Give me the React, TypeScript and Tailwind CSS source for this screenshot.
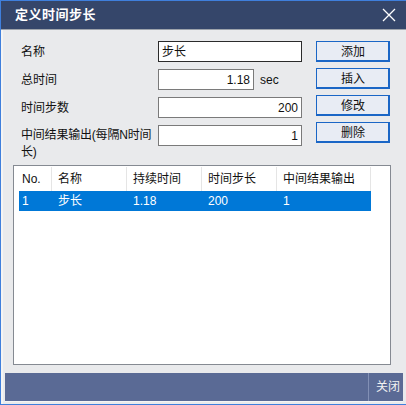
import React from "react"

const font = { fontFamily: '"Liberation Sans", "Noto Sans CJK SC", sans-serif' }

const columns = [
    { key: "no", label: "No.", width: "w-[33px]", pad: "pl-[3px]" },
    { key: "name", label: "名称", width: "w-[75px]", pad: "pl-[6px]" },
    { key: "dur", label: "持续时间", width: "w-[75px]", pad: "pl-[6px]" },
    { key: "step", label: "时间步长", width: "w-[75px]", pad: "pl-[6px]" },
    { key: "out", label: "中间结果输出", width: "w-[94px]", pad: "pl-[6px]" },
]

const rows = [{ no: "1", name: "步长", dur: "1.18", step: "200", out: "1" }]

function Btn({ children }: { children: React.ReactNode }) {
    return (
        <button className="h-[21px] w-[74px] border border-[#1a66c6] bg-[#e8ecf4] text-[12px] text-[#111] shadow-[inset_-1px_-1px_0_#1a66c6] leading-none">
            {children}
        </button>
    )
}

export default function App() {
    return (
        <div
            className="w-[406px] h-[405px] flex flex-col border border-[#3f7fdc] border-r-0 bg-[#e9eaec] text-[12px] text-[#111]"
            style={font}
        >
            {/* title bar */}
            <div className="h-[29px] shrink-0 bg-[#35466a] flex items-center justify-between pl-[14px] pr-[9px] border-b border-[#9da3ab]">
                <span className="text-white font-bold text-[13px] tracking-[0.5px]">定义时间步长</span>
                <svg width="14" height="14" viewBox="0 0 14 14" className="mr-[1px]">
                    <path d="M1 1 L13 13 M13 1 L1 13" stroke="#fff" strokeWidth="1.3" />
                </svg>
            </div>

            <div className="flex-1 flex flex-col border-l-[2px] border-[#f4f4f4]">
                {/* form */}
                <div className="flex pt-[11px] pl-[18px]">
                    <div className="flex flex-col gap-[7px] w-[283px]">
                        <div className="flex items-center h-[21px]">
                            <span className="w-[137px]">名称</span>
                            <div className="w-[144px] h-[21px] border border-[#2b2b2b] bg-white flex items-center px-[3px]">步长</div>
                        </div>
                        <div className="flex items-center h-[21px]">
                            <span className="w-[137px]">总时间</span>
                            <div className="w-[96px] h-[21px] border border-[#7a7a7a] bg-white flex items-center justify-end px-[3px]">1.18</div>
                            <span className="ml-[6px]">sec</span>
                        </div>
                        <div className="flex items-center h-[21px]">
                            <span className="w-[137px]">时间步数</span>
                            <div className="w-[144px] h-[21px] border border-[#7a7a7a] bg-white flex items-center justify-end px-[3px]">200</div>
                        </div>
                        <div className="flex items-start h-[21px]">
                            <span className="w-[137px] shrink-0 leading-[17px] mt-[2px] tracking-[-0.2px]">中间结果输出(每隔N时间长)</span>
                            <div className="w-[144px] h-[21px] shrink-0 border border-[#7a7a7a] bg-white flex items-center justify-end px-[3px]">1</div>
                        </div>
                    </div>
                    <div className="flex flex-col gap-[6px] ml-[15px] -translate-x-[3px]">
                        <Btn>添加</Btn>
                        <Btn>插入</Btn>
                        <Btn>修改</Btn>
                        <Btn>删除</Btn>
                    </div>
                </div>

                {/* list */}
                <div className="mt-[19px] ml-[10px] w-[378px] h-[200px] border border-[#858a92] bg-white pl-[5px] pt-[1px]">
                    <div className="flex h-[24px]">
                        {columns.map((c) => (
                            <div key={c.key} className={`${c.width} ${c.pad} flex items-center border-r border-[#e5e5e5]`}>
                                {c.label}
                            </div>
                        ))}
                    </div>
                    {rows.map((r) => (
                        <div key={r.no} className="flex h-[20px] bg-[#0078d7] text-white w-[352px]">
                            {columns.map((c) => (
                                <div key={c.key} className={`${c.width} ${c.pad} flex items-center`}>
                                    {r[c.key as keyof typeof r]}
                                </div>
                            ))}
                        </div>
                    ))}
                </div>

                {/* footer */}
                <div className="mt-[8px] ml-[2px] w-[398px] h-[29px] bg-[#5a6a95] flex justify-end border-b border-[#f4f4f4]">
                    <div className="w-[35px] border-l border-[#8290b5] flex items-center pl-[7px] text-[#f2f2f2]">关闭</div>
                </div>
            </div>
        </div>
    )
}
